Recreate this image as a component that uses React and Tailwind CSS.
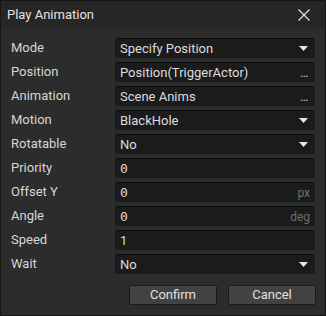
import React from "react";

const Caret = () => (
  <svg width="9" height="5" viewBox="0 0 9 5" className="shrink-0">
    <path d="M0 0H9L4.5 5Z" fill="#e6e6e6" />
  </svg>
);

const Field = ({ children, right, mono }) => (
  <div className="flex h-[20px] w-[200px] items-center justify-between rounded-[2px] border-t border-t-[#0c0c0c] bg-[#1b1b1b] pl-[5px] pr-[7px]">
    <span className={"text-[13px] leading-none text-[#dcdcdc] " + (mono ? "font-['DejaVu_Sans_Mono',monospace] text-[12px]" : "")}>{children}</span>
    {right}
  </div>
);

const rows = [
  ["Mode", "Specify Position", "select"],
  ["Position", "Position(TriggerActor)", "dots"],
  ["Animation", "Scene Anims", "dots"],
  ["Motion", "BlackHole", "select"],
  ["Rotatable", "No", "select"],
  ["Priority", "0", "mono"],
  ["Offset Y", "0", "px"],
  ["Angle", "0", "deg"],
  ["Speed", "1", "none"],
  ["Wait", "No", "select"],
];

export default function App() {
  return (
    <div className="h-[316px] w-[326px] border border-[#151515] bg-[#2c2c2c] font-['Roboto',sans-serif]">
      <div className="flex h-[28px] items-center justify-between bg-[#262626] pl-[6px] pr-[15px]">
        <span className="text-[13px] text-[#e2e2e2]">Play Animation</span>
        <svg width="12" height="12" viewBox="0 0 12 12">
          <path d="M0.5 0.5L11.5 11.5M11.5 0.5L0.5 11.5" stroke="#dcdcdc" strokeWidth="1.3" />
        </svg>
      </div>
      <div className="flex flex-col gap-[4px] pt-[9px] pl-[10px]">
        {rows.map(([label, value, kind]) => (
          <div key={label} className="flex items-center">
            <span className="w-[104px] text-[13px] text-[#d6d6d6]">{label}</span>
            <Field
              mono={kind === "mono" || kind === "px" || kind === "deg"}
              right={
                kind === "select" ? (
                  <Caret />
                ) : kind === "dots" ? (
                  <span className="text-[12px] leading-none text-[#d0d0d0] tracking-[-0.5px]">...</span>
                ) : kind === "px" || kind === "deg" ? (
                  <span className="text-[12px] leading-none text-[#6f6f6f] -mr-[2px]">{kind}</span>
                ) : null
              }
            >
              {value}
            </Field>
          </div>
        ))}
        <div className="mt-[7px] flex gap-[11px] pl-[118px]">
          <button className="flex h-[20px] w-[88px] items-center justify-center rounded-[2px] border border-[#1a1a1a] bg-[#424242] text-[13px] text-[#e0e0e0]">Confirm</button>
          <button className="flex h-[20px] w-[88px] items-center justify-center rounded-[2px] border border-[#1a1a1a] bg-[#424242] text-[13px] text-[#e0e0e0]">Cancel</button>
        </div>
      </div>
    </div>
  );
}
